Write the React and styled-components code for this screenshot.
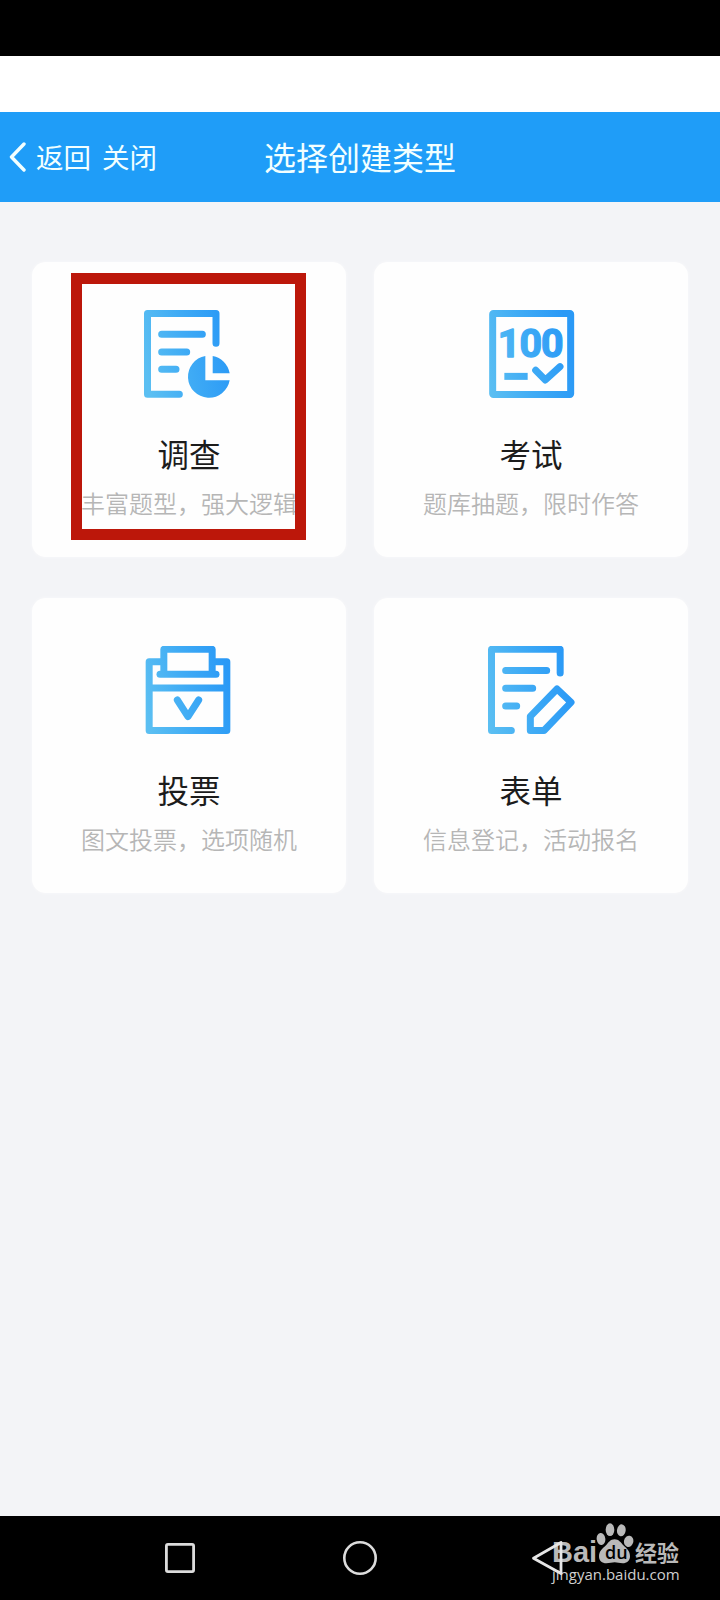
import React from 'react'
import styled, { createGlobalStyle } from 'styled-components'

const types = [
  { icon: SurveyIcon, name: '调查', text: '丰富题型，强大逻辑', marked: true },
  { icon: ExamIcon, name: '考试', text: '题库抽题，限时作答' },
  { icon: VoteIcon, name: '投票', text: '图文投票，选项随机' },
  { icon: FormIcon, name: '表单', text: '信息登记，活动报名' },
]

export default function App() {
  return (
    <Page>
      <GlobalStyle />
      <StatusBar />
      <Spacer />
      <Header>
        <Back>
          <svg width="18" height="30" viewBox="0 0 18 30" fill="none" stroke="#f2ffff" strokeWidth="3.4" strokeLinecap="round" strokeLinejoin="round">
            <path d="M16 2 L3.500 15 L16 28" />
          </svg>
          <HeaderLink>返回</HeaderLink>
          <HeaderLink>关闭</HeaderLink>
        </Back>
        <Title>选择创建类型</Title>
      </Header>
      <Content>
        {types.map(({ icon: Icon, name, text, marked }) => (
          <Card key={name}>
            <Icon />
            <CardName>{name}</CardName>
            <CardText>{text}</CardText>
            {marked && <Marker />}
          </Card>
        ))}
      </Content>
      <NavBar>
        <NavButton>
          <svg width="34" height="34" viewBox="0 0 34 34" fill="none" stroke="#dcdcdc" strokeWidth="2.8">
            <rect x="3.4" y="3.4" width="27.2" height="27.2" rx="1.5" />
          </svg>
        </NavButton>
        <NavButton>
          <svg width="36" height="36" viewBox="0 0 36 36" fill="none" stroke="#dcdcdc" strokeWidth="2.6">
            <circle cx="18" cy="18" r="15.7" />
          </svg>
        </NavButton>
        <NavButton $shift="14px">
          <svg width="36" height="38" viewBox="0 0 36 38" fill="none" stroke="#e6e6e6" strokeWidth="2.8" strokeLinejoin="round">
            <path d="M32 3.500 L4.500 19.200 L32 34.500 Z" />
          </svg>
        </NavButton>
        <Watermark>
          <Brand>
            <Bai>Bai</Bai>
            <Paw>
              <svg width="38" height="41" viewBox="0 0 114 123" fill="#b9b9b9">
                <ellipse cx="15" cy="48" rx="13" ry="18" transform="rotate(-8 15 48)" />
                <ellipse cx="42" cy="20" rx="13" ry="19" />
                <ellipse cx="76" cy="22" rx="13" ry="18" transform="rotate(8 76 22)" />
                <ellipse cx="98" cy="55" rx="14" ry="17" transform="rotate(12 98 55)" />
                <path d="M56 49 C68 49 74 58 82 67 C92 77 102 84 102 100 C102 114 92 121 80 121 C70 121 64 118 56 118 C48 118 41 121 31 121 C18 121 9 114 9 100 C9 84 20 77 30 67 C38 58 43 49 56 49 Z" />
              </svg>
              <Du>du</Du>
            </Paw>
            <Jingyan>经验</Jingyan>
          </Brand>
          <Site>jingyan.baidu.com</Site>
        </Watermark>
      </NavBar>
    </Page>
  )
}

function Gradient({ id }) {
  return (
    <linearGradient id={id} gradientUnits="userSpaceOnUse" x1="42" y1="210" x2="300" y2="160">
      <stop offset="0" stopColor="#5bbff2" />
      <stop offset="0.5" stopColor="#3fabf5" />
      <stop offset="1" stopColor="#2a99f6" />
    </linearGradient>
  )
}

function SurveyIcon() {
  return (
    <Glyph viewBox="42 45 270 270">
      <Gradient id="survey" />
      <g fill="none" stroke="url(#survey)" strokeWidth="21" strokeLinecap="round" strokeLinejoin="round">
        <path d="M258 145 V55.5 H52.5 V298 H148" />
        <path d="M95 118.1 H217 M95 171.1 H170 M95 223.1 H138" />
      </g>
      <g fill="url(#survey)">
        <path d="M226 183 A63 63 0 1 0 299 256 H226 Z" />
        <path d="M248 183 A63 63 0 0 1 299 235 H248 Z" />
      </g>
    </Glyph>
  )
}

function ExamIcon() {
  return (
    <Glyph viewBox="48 45 270 270">
      <Gradient id="exam" />
      <g fill="none" stroke="url(#exam)" strokeWidth="21">
        <rect x="68" y="55.5" width="234" height="243" rx="2" />
        <path d="M103 244.1 H173" />
        <path d="M197 226 L226 255 L270 215" strokeLinecap="round" strokeLinejoin="round" />
      </g>
      <Score x="83" y="185" textLength="198">100</Score>
    </Glyph>
  )
}

function VoteIcon() {
  return (
    <Glyph viewBox="42 48 270 270">
      <Gradient id="vote" />
      <g fill="none" stroke="url(#vote)" strokeWidth="21" strokeLinejoin="round">
        <path d="M100 95.5 H57.500 V301.500 H290.500 V95.500 H248" />
        <path d="M101.500 131 V58 H246.500 V131" />
        <path d="M90 132.5 H258" strokeLinecap="round" />
        <path d="M58 174.100 H290" />
        <path d="M142 210 L174 260 L206 210" strokeLinecap="round" />
      </g>
    </Glyph>
  )
}

function FormIcon() {
  return (
    <Glyph viewBox="48 48 270 270">
      <Gradient id="form" />
      <g fill="none" stroke="url(#form)" strokeWidth="21" strokeLinecap="round" strokeLinejoin="round">
        <path d="M270.500 129 V58 H64.500 V301.500 H124" />
        <path d="M107 121.600 H230 M107 175.100 H188 M107 228.100 H140" />
        <path d="M181 259 L261 177 L303 217 L222 301.500 H181 Z" />
      </g>
    </Glyph>
  )
}

const GlobalStyle = createGlobalStyle`
  body {
    margin: 0;
    font-family: 'Noto Sans CJK SC', sans-serif;
  }
`

const Page = styled.div`
  display: flex;
  flex-direction: column;
  width: 720px;
  height: 1600px;
  overflow: hidden;
  background-color: #f3f4f7;
`

const StatusBar = styled.div`
  height: 56px;
  background-color: #000;
`

const Spacer = styled.div`
  height: 56px;
  background-color: #fff;
`

const Header = styled.header`
  display: grid;
  grid-template-columns: 1fr auto 1fr;
  align-items: center;
  height: 90px;
  background-color: #1f9df8;
  color: #f2ffff;
`

const Back = styled.div`
  display: flex;
  align-items: center;
  padding-left: 8px;
`

const HeaderLink = styled.span`
  margin: 0 0 2px 11px;
  font-size: 27.5px;
  line-height: 40px;

  svg + & {
    margin-left: 10px;
  }
`

const Title = styled.h1`
  margin: 0 0 2px;
  font-size: 32px;
  line-height: 48px;
  font-weight: 400;
`

const Content = styled.main`
  flex: 1;
  display: grid;
  grid-template-columns: 314px 314px;
  grid-auto-rows: 295px;
  align-content: start;
  gap: 41px 28px;
  padding: 60px 32px 0;
`

const Card = styled.div`
  position: relative;
  display: flex;
  flex-direction: column;
  align-items: center;
  padding-top: 48px;
  box-sizing: border-box;
  border-radius: 14px;
  background-color: #fefefe;
  box-shadow: 0 0 3px #fafafb;
`

const Glyph = styled.svg`
  width: 90px;
  height: 90px;
`

const Score = styled.text`
  font-family: Roboto, sans-serif;
  font-size: 118px;
  font-weight: 700;
  fill: url(#exam);
  stroke: url(#exam);
  stroke-width: 4px;
  stroke-linejoin: round;
`

const CardName = styled.div`
  margin-top: 29px;
  font-size: 31.5px;
  line-height: 48px;
  color: #1c1c1c;
`

const CardText = styled.div`
  margin-top: 8px;
  font-size: 24px;
  line-height: 36px;
  font-weight: 350;
  color: #b6b6b6;
`

const Marker = styled.div`
  position: absolute;
  top: 11px;
  left: 39px;
  width: 235px;
  height: 267px;
  box-sizing: border-box;
  border: 11px solid #bc170a;
`

const NavBar = styled.nav`
  position: relative;
  display: grid;
  grid-template-columns: repeat(3, 180px);
  justify-content: center;
  align-items: center;
  height: 84px;
  background-color: #000;
`

const NavButton = styled.div`
  display: flex;
  justify-content: center;
  padding-left: ${props => props.$shift || '0'};
  z-index: 1;
`

const Watermark = styled.div`
  position: absolute;
  top: 6px;
  left: 552px;
  color: #b9b9b9;
`

const Brand = styled.div`
  display: flex;
  align-items: flex-end;
  height: 42px;
`

const Bai = styled.span`
  width: 44px;
  font: 700 29px/24px 'Liberation Sans', sans-serif;
`

const Paw = styled.div`
  position: relative;
  width: 38px;
  height: 41px;
`

const Du = styled.span`
  position: absolute;
  left: 9px;
  bottom: 3px;
  font: 600 18px/18px 'Open Sans', sans-serif;
  color: #000;
`

const Jingyan = styled.span`
  margin: 0 0 2px 1px;
  font-size: 22px;
  line-height: 22px;
  font-weight: 700;
`

const Site = styled.div`
  font: 400 15px/20px 'Open Sans', sans-serif;
  color: #cfcfcf;
`
